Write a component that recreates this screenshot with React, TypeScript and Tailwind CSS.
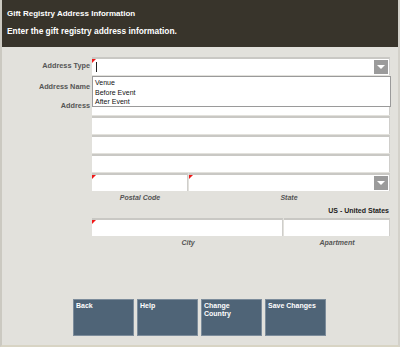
import React from "react";

const font = { fontFamily: '"Liberation Sans", Arial, sans-serif' };

function RequiredMark() {
  return (
    <span className="absolute left-0 top-0 h-0 w-0 border-t-[4px] border-r-[4px] border-t-[#f01818] border-r-transparent" />
  );
}

function DropButton() {
  return (
    <div className="absolute right-[1px] top-[1px] bottom-[1px] flex w-[14px] items-center justify-center bg-[#9b9b9b]">
      <span className="h-0 w-0 border-x-[4px] border-t-[4px] border-x-transparent border-t-white" />
    </div>
  );
}

function Field({
  className = "",
  required = false,
  select = false,
  children,
}: {
  className?: string;
  required?: boolean;
  select?: boolean;
  children?: React.ReactNode;
}) {
  return (
    <div
      className={`relative h-[18px] border-t-2 border-r border-t-[#c9c8c4] border-r-[#cfcecb] bg-white ${className}`}
    >
      {required && <RequiredMark />}
      {select && <DropButton />}
      {children}
    </div>
  );
}

function Row({ label, children, className = "" }: { label?: string; children: React.ReactNode; className?: string }) {
  return (
    <div className={`flex ${className}`}>
      <div className="flex w-[90px] shrink-0 items-center justify-end pr-[2px] text-[7.3px] font-bold text-[#555]">
        {label}
      </div>
      <div className="w-[298px] shrink-0">{children}</div>
    </div>
  );
}

const buttons = ["Back", "Help", "Change Country", "Save Changes"];

export default function App() {
  return (
    <div
      style={font}
      className="relative h-[347px] w-[400px] overflow-hidden border-l-2 border-r-2 border-b-2 border-l-[#cbc9c1] border-r-[#d3d1ca] border-b-[#d8d4c4] bg-[#e2e1dc]"
    >
      {/* Header */}
      <div className="h-[47px] bg-[#38342b] px-[5px] pt-[9px] text-white">
        <div className="text-[8px] font-bold leading-[10px]">Gift Registry Address Information</div>
        <div className="mt-[7px] text-[8.4px] font-bold leading-[10px]">
          Enter the gift registry address information.
        </div>
      </div>

      {/* Form */}
      <div className="pt-[10px]">
        <Row label="Address Type">
          <div className="relative">
            <Field required select>
              <span className="absolute left-[4px] top-[3px] h-[10px] w-px bg-[#222]" />
            </Field>
            {/* open list */}
            <div className="absolute left-0 top-[19px] z-10 h-[31px] w-[299px] border border-[#9a9a9a] bg-white pl-[2px] pt-[1px] text-[7px] leading-[9.5px] text-[#111]">
              <div>Venue</div>
              <div>Before Event</div>
              <div>After Event</div>
            </div>
          </div>
        </Row>
        <Row label="Address Name" className="mt-[3px]">
          <Field />
        </Row>
        <Row label="Address" className="mt-[1px]">
          <Field />
        </Row>
        <Row className="mt-[1px]">
          <Field />
        </Row>
        <Row className="mt-[1px]">
          <Field />
        </Row>
        <Row className="mt-[1px]">
          <Field />
        </Row>
        <Row className="mt-[1px]">
          <div className="flex">
            <Field required className="w-[96px]" />
            <Field required select className="ml-px flex-1" />
          </div>
        </Row>
        <Row>
          <div className="flex h-[14px] items-center text-[7px] font-bold italic text-[#555]">
            <div className="w-[96px] text-center">Postal Code</div>
            <div className="flex-1 text-center">State</div>
          </div>
        </Row>
        <Row>
          <div className="h-[12px] pr-[1px] text-right text-[7px] font-bold leading-[12px] text-[#222]">
            US - United States
          </div>
        </Row>
        <Row className="mt-px">
          <div className="flex">
            <Field required className="w-[191px]" />
            <Field className="ml-px flex-1" />
          </div>
        </Row>
        <Row>
          <div className="flex h-[14px] items-center text-[7px] font-bold italic text-[#555]">
            <div className="w-[192px] text-center">City</div>
            <div className="flex-1 text-center">Apartment</div>
          </div>
        </Row>
      </div>

      {/* Buttons */}
      <div className="mt-[49px] flex gap-[3px] pl-[71px]">
        {buttons.map((b) => (
          <div
            key={b}
            className="h-[37px] w-[61px] border border-[#7c8c9b] bg-[#4f6477] px-[2px] pt-[2px] text-[7px] font-bold leading-[8px] text-white"
          >
            {b === "Change Country" ? (
              <>
                Change
                <br />
                Country
              </>
            ) : (
              b
            )}
          </div>
        ))}
      </div>
    </div>
  );
}
